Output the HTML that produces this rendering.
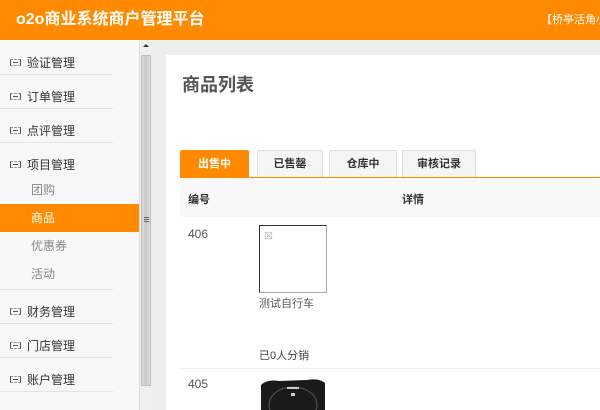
<!DOCTYPE html>
<html><head><meta charset="utf-8"><style>
*{margin:0;padding:0;box-sizing:border-box}
body{width:600px;height:410px;overflow:hidden;background:#eee;font-family:"Liberation Sans","Noto Sans CJK SC",sans-serif;position:relative}
.hd{position:absolute;left:0;top:0;width:600px;height:40px;background:#ff8a00;color:#fff}
.hd .t{position:absolute;left:16px;top:9px;font-size:16px;font-weight:bold;line-height:22px}
.hd .r{position:absolute;left:541px;top:13px;font-size:11px;line-height:14px;white-space:nowrap}
.sb{position:absolute;left:0;top:40px;width:139px;height:370px;background:#f8f8f8}
.it{position:absolute;left:0;width:113px;height:34px;font-size:12px;color:#333;line-height:34px;padding-left:10px}
.it .ic{display:inline-block;width:11px;height:7px;border:1px solid #555;border-top-style:dashed;border-bottom-style:dashed;border-top-color:#999;border-bottom-color:#999;position:relative;margin-right:6px;vertical-align:1px}
.it .ic:after{content:"";position:absolute;left:2px;right:2px;top:2px;height:1px;background:#555}
.ln{position:absolute;left:0;width:113px;height:1px;background:#e4e4e4}
.sub{position:absolute;left:0;width:139px;height:28px;line-height:28px;font-size:12px;color:#888;padding-left:31px}
.sub.a{background:#ff8a00;color:#fff}
.scr{position:absolute;left:139px;top:40px;width:12px;height:370px;background:#f0f0f0;border-left:1px solid #ddd}
.thumb{position:absolute;left:1px;top:15px;width:10px;height:331px;background:linear-gradient(90deg,#ddd,#c8c8c8,#ddd);border:1px solid #bbb;border-radius:1px}
.main{position:absolute;left:166px;top:55px;width:434px;height:355px;background:#fff}
h1{position:absolute;left:16px;top:16px;font-size:18px;color:#555;font-weight:bold}
.tab{position:absolute;top:95px;height:27px;border:1px solid #ddd;border-bottom:none;background:#f5f5f5;font-size:11px;color:#333;text-align:center;line-height:27px;font-weight:bold;border-radius:2px 2px 0 0}
.tab.a{background:#ff8a00;color:#fff;border-color:#ff8a00}
.bar{position:absolute;left:14px;top:122px;width:420px;height:1px;background:#ff8a00}
.th{position:absolute;left:14px;top:123px;width:420px;height:39px;background:#f8f8f8;font-size:11px;color:#333;font-weight:bold}
.tx{position:absolute;font-size:12px;color:#555}
</style></head><body>
<div class="hd"><div class="t">o2o商业系统商户管理平台</div><div class="r">【桥亭活角小</div></div>
<div class="sb">
<div class="it" style="top:6px"><span class="ic"></span>验证管理</div><div class="ln" style="top:34px"></div>
<div class="it" style="top:40px"><span class="ic"></span>订单管理</div><div class="ln" style="top:68px"></div>
<div class="it" style="top:74px"><span class="ic"></span>点评管理</div><div class="ln" style="top:102px"></div>
<div class="it" style="top:108px"><span class="ic"></span>项目管理</div>
<div class="sub" style="top:136px">团购</div>
<div class="sub a" style="top:164px">商品</div>
<div class="sub" style="top:192px">优惠券</div>
<div class="sub" style="top:220px">活动</div><div class="ln" style="top:249px"></div>
<div class="it" style="top:255px"><span class="ic"></span>财务管理</div><div class="ln" style="top:283px"></div>
<div class="it" style="top:289px"><span class="ic"></span>门店管理</div><div class="ln" style="top:317px"></div>
<div class="it" style="top:323px"><span class="ic"></span>账户管理</div><div class="ln" style="top:351px"></div>
</div>
<div class="scr"><div style="position:absolute;left:3px;top:4px;width:0;height:0;border:3px solid transparent;border-bottom:3px solid #333;border-top:none"></div><div class="thumb"><div style="position:absolute;left:2px;top:161px;width:5px;height:5px;border-top:1px solid #666;border-bottom:1px solid #666"><div style="margin-top:1px;height:1px;background:#666"></div></div></div></div>
<div class="main">
<h1>商品列表</h1>
<div class="tab a" style="left:14px;width:69px">出售中</div>
<div class="tab" style="left:91px;width:66px">已售罄</div>
<div class="tab" style="left:163px;width:68px">仓库中</div>
<div class="tab" style="left:236px;width:74px">审核记录</div>
<div class="bar"></div>
<div class="th"><span style="position:absolute;left:8px;top:13px">编号</span><span style="position:absolute;left:222px;top:13px">详情</span></div>
<div class="tx" style="left:22px;top:172px">406</div>
<div style="position:absolute;left:93px;top:170px;width:68px;height:68px;border:1px solid #333;border-right-color:#aaa;border-bottom-color:#aaa"><span style="position:absolute;left:4px;top:3px;font-size:9px;color:#aaa">⊠</span></div>
<div class="tx" style="left:93px;top:240px;font-size:11px">测试自行车</div>
<div class="tx" style="left:93px;top:292px;font-size:11px;color:#444">已0人分销</div>
<div style="position:absolute;left:14px;top:313px;width:420px;height:1px;background:#eee"></div>
<div class="tx" style="left:22px;top:322px">405</div>
<svg style="position:absolute;left:93px;top:322px" width="68" height="33"><path d="M2 8 Q8 2 20 4 L48 3 Q60 1 66 6 L66 33 L2 33 Z" fill="#1a1a1a"/><ellipse cx="34" cy="28" rx="24" ry="18" fill="none" stroke="#555"/><rect x="28" y="10" width="12" height="2" fill="#ccc"/><rect x="32" y="16" width="4" height="3" fill="#ccc"/></svg>
</div>
</body></html>
